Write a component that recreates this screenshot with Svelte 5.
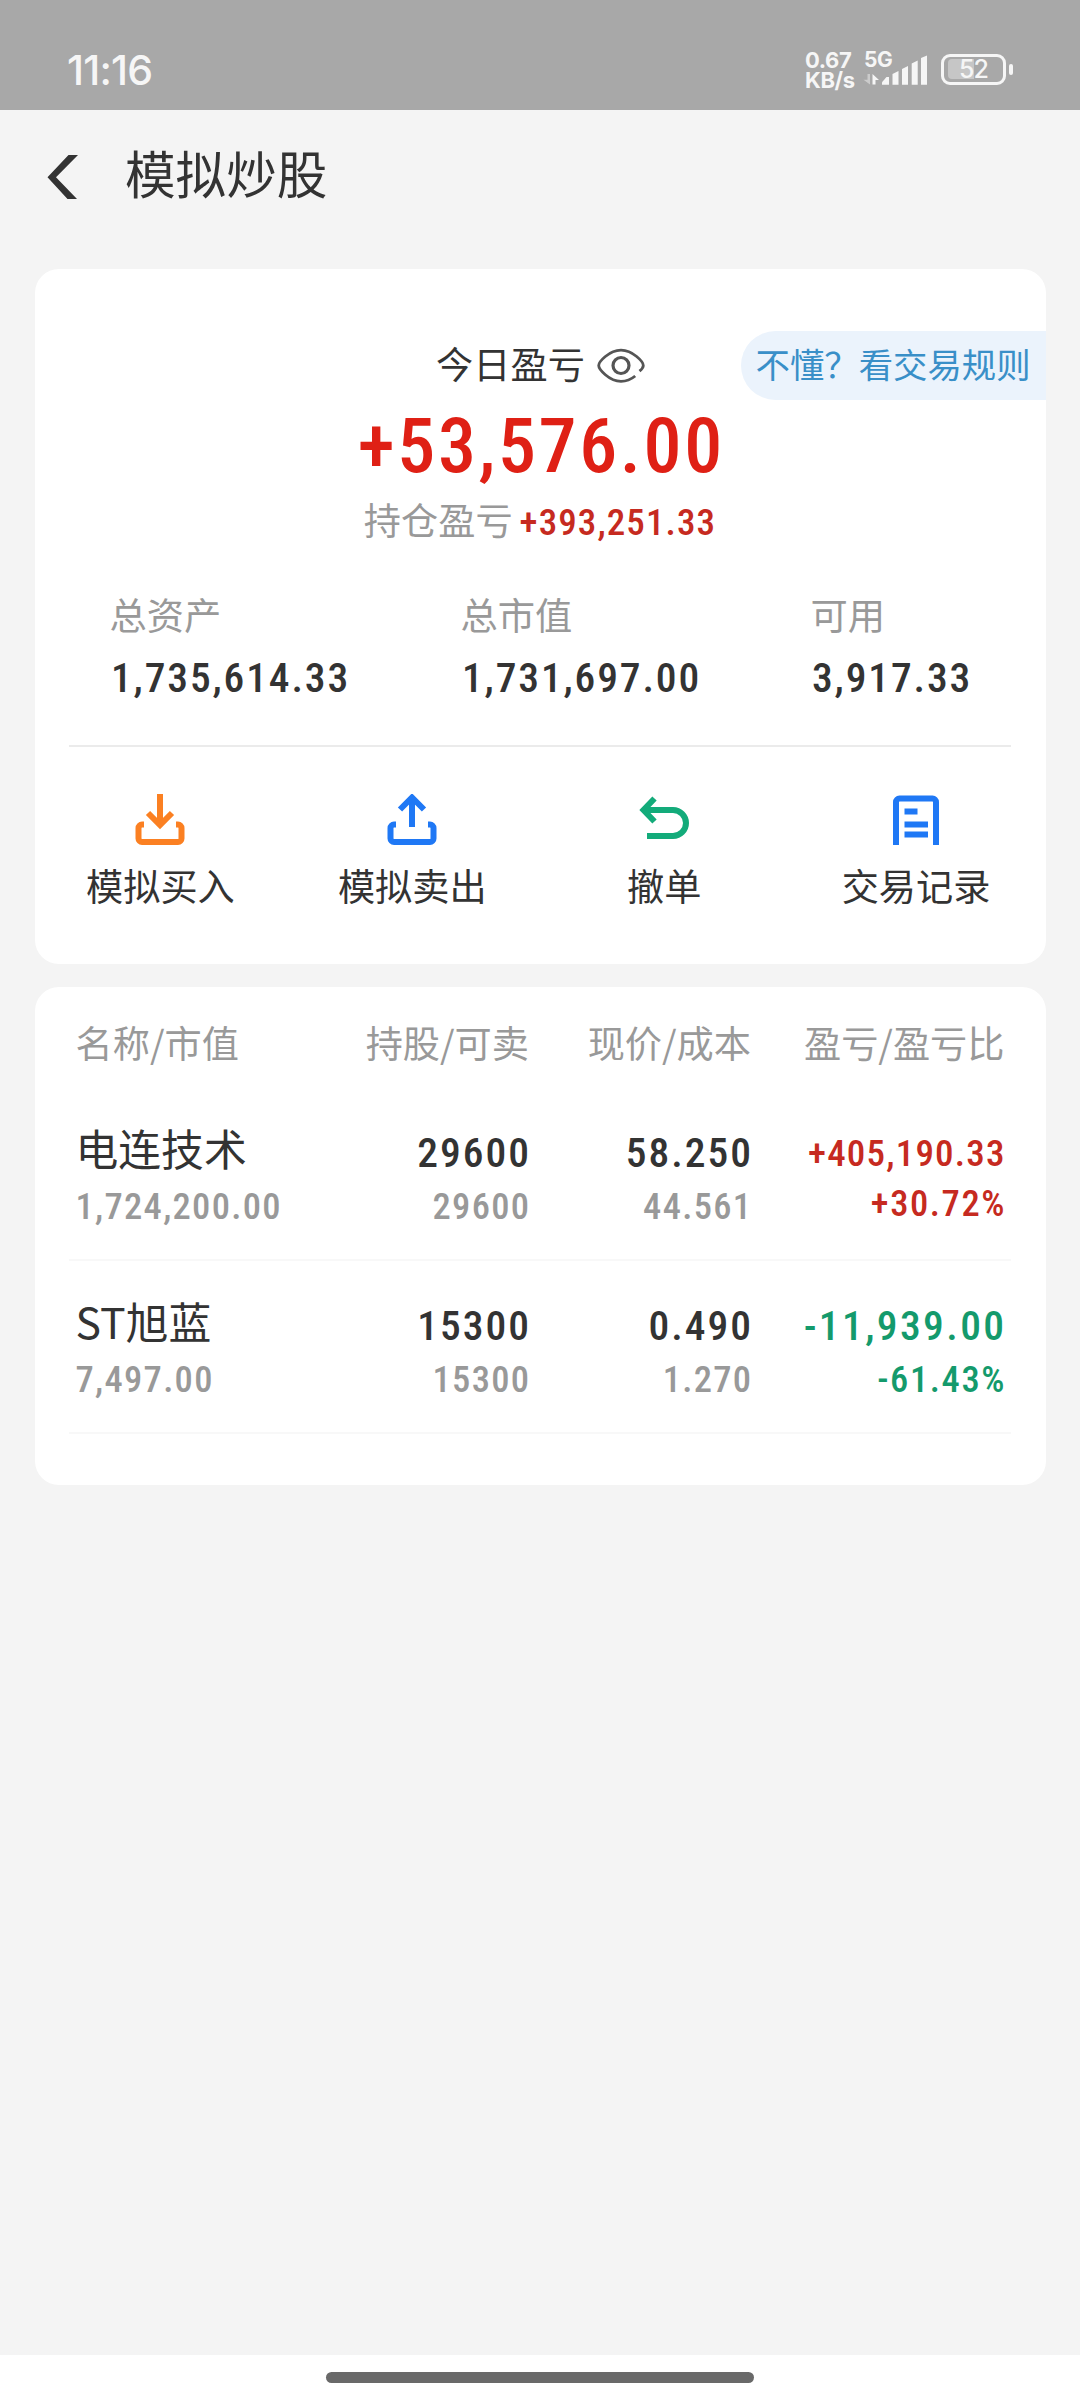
<script lang="ts">
  type Holding = {
    name: string;
    marketValue: string;
    shares: string;
    sellable: string;
    price: string;
    cost: string;
    profit: string;
    ratio: string;
  };

  const stats = [
    { label: '总资产', value: '1,735,614.33' },
    { label: '总市值', value: '1,731,697.00' },
    { label: '可用', value: '3,917.33' },
  ];

  const actions = [
    { id: 'buy', label: '模拟买入' },
    { id: 'sell', label: '模拟卖出' },
    { id: 'cancel', label: '撤单' },
    { id: 'records', label: '交易记录' },
  ];

  const columns = ['名称/市值', '持股/可卖', '现价/成本', '盈亏/盈亏比'];

  const holdings: Holding[] = [
    {
      name: '电连技术',
      marketValue: '1,724,200.00',
      shares: '29600',
      sellable: '29600',
      price: '58.250',
      cost: '44.561',
      profit: '+405,190.33',
      ratio: '+30.72%',
    },
    {
      name: 'ST旭蓝',
      marketValue: '7,497.00',
      shares: '15300',
      sellable: '15300',
      price: '0.490',
      cost: '1.270',
      profit: '-11,939.00',
      ratio: '-61.43%',
    },
  ];

  // long amounts drop to the smaller size so they fit the last column
  const isLong = (value: string) => value.length > 10;
</script>

<div class="screen">
  <div class="status-bar">
    <span class="clock">11:16</span>
    <div class="status-right">
      <div class="speed"><span>0.67</span><span>KB/s</span></div>
      <div class="signal">
        <span class="network">5G</span>
        <svg width="66" height="36" viewBox="0 0 66 36" fill="#f6f6f6">
          <path d="M4.5 24h2.5v10.5L.5 29.8h4z" opacity="0.45" />
          <path d="M9.5 34.5V24l6.500 6h-3.500v4.500z" />
          <path d="M19 34.700v-2.500l4.500-5.200h2.500v7.700z" />
          <path d="M29.500 24l6-3v13.700h-6z" />
          <path d="M39 19l6-3v18.700h-6z" />
          <path d="M48.700 13.500l6-3v24.200h-6z" />
          <path d="M58 8l6-2.500v29.200h-6z" />
        </svg>
      </div>
      <div class="battery"><span class="level"></span><span class="percent">52</span></div>
      <span class="battery-tip"></span>
    </div>
  </div>

  <header class="nav">
    <svg width="32" height="46" viewBox="0 0 32 46" fill="#333">
      <path d="M22.500 1H32L10 23.200 31 45h-9.500L1.500 23.200z" />
    </svg>
    <h1>模拟炒股</h1>
  </header>

  <section class="card summary">
    <div class="today">
      <div class="today-label">
        <span>今日盈亏</span>
        <svg width="48" height="36" viewBox="0 0 48 36" fill="none" stroke="#555" stroke-width="2.800">
          <path
            d="M42.500 23.200C45.200 21 46.300 19.200 46.300 17.500 46.300 14 36 2.200 24 2.200S1.700 14 1.700 17.500 12 33.300 24 33.300c5.200 0 10.200-2 14.200-5.300"
          />
          <circle cx="24" cy="17.500" r="8" stroke-width="3.200" />
        </svg>
      </div>
      <span class="rules">不懂？看交易规则</span>
    </div>
    <div class="today-value">+53,576.00</div>
    <div class="position">
      <span>持仓盈亏</span>
      <strong>+393,251.33</strong>
    </div>

    <div class="stats">
      {#each stats as stat (stat.label)}
        <div>
          <p class="stat-label">{stat.label}</p>
          <p class="stat-value">{stat.value}</p>
        </div>
      {/each}
    </div>

    <div class="actions">
      {#each actions as action (action.id)}
        <div class="action">
          <svg width="52" height="52" viewBox="0 0 52 52" fill="none" stroke-width="6">
            {#if action.id === 'buy'}
              <g stroke="#fb8022">
                <path d="M26 0v32" />
                <path d="M14 19l12 12 12-12" />
                <path d="M10 30.500H8a3.500 3.500 0 0 0-3.500 3.500v10.500a3.500 3.500 0 0 0 3.500 3.500h36a3.500 3.500 0 0 0 3.500-3.500V34a3.500 3.500 0 0 0-3.500-3.500h-2" />
              </g>
            {:else if action.id === 'sell'}
              <g stroke="#1f78f5">
                <path d="M26 33V4" />
                <path d="M14 15.500l12-12 12 12" />
                <path d="M10 30.500H8a3.500 3.500 0 0 0-3.500 3.500v10.500a3.500 3.500 0 0 0 3.500 3.500h36a3.500 3.500 0 0 0 3.500-3.500V34a3.500 3.500 0 0 0-3.500-3.500h-2" />
              </g>
            {:else if action.id === 'cancel'}
              <g stroke="#13ab7a">
                <path d="M16.500 4.500L5.500 16l11 11.500" />
                <path d="M6 16h29a13 13 0 0 1 0 26H9" />
              </g>
            {:else}
              <g stroke="#1f78f5">
                <path d="M6 51V8a3.500 3.500 0 0 1 3.500-3.500h33A3.500 3.500 0 0 1 46 8v43" />
                <path d="M14.500 17.500h13M14.500 30.500h23.500M14.500 40.500h23.500" />
              </g>
            {/if}
          </svg>
          <span>{action.label}</span>
        </div>
      {/each}
    </div>
  </section>

  <section class="card holdings">
    <div class="row table-head">
      {#each columns as column (column)}
        <span>{column}</span>
      {/each}
    </div>

    {#each holdings as item (item.name)}
      <div class="row holding">
        <div class="cell">
          <p class="name">{item.name}</p>
          <p class="sub">{item.marketValue}</p>
        </div>
        <div class="cell">
          <p class="main">{item.shares}</p>
          <p class="sub">{item.sellable}</p>
        </div>
        <div class="cell">
          <p class="main">{item.price}</p>
          <p class="sub">{item.cost}</p>
        </div>
        <div
          class="cell profit"
          class:down={item.profit.startsWith('-')}
          class:compact={isLong(item.profit)}
        >
          <p class="main">{item.profit}</p>
          <p class="sub">{item.ratio}</p>
        </div>
      </div>
    {/each}
  </section>

  <footer class="gesture-bar"><span></span></footer>
</div>

<style>
  :global(body) {
    background: #f4f4f4;
  }

  .screen {
    width: 1080px;
    height: 2400px;
    display: flex;
    flex-direction: column;
    overflow: hidden;
    background: #f4f4f4;
    color: #333;
    font-family: 'Noto Sans CJK SC', sans-serif;
  }

  p,
  h1 {
    margin: 0;
    font-weight: 400;
  }

  .status-bar {
    box-sizing: border-box;
    height: 110px;
    padding: 30px 67px 0 67px;
    display: flex;
    justify-content: space-between;
    align-items: flex-start;
    background: #a8a8a8;
    color: #f6f6f6;
    font-family: Inter, sans-serif;
  }

  .clock {
    font-size: 41px;
    line-height: 80px;
    font-weight: 500;
    letter-spacing: -0.8px;
  }

  .status-right {
    display: flex;
    align-items: flex-start;
    padding-top: 20px;
  }

  .speed {
    width: 58px;
    display: flex;
    flex-direction: column;
    font-size: 22px;
    line-height: 20px;
    font-weight: 700;
    letter-spacing: -0.4px;
  }

  .signal {
    position: relative;
    height: 36px;
  }

  .network {
    position: absolute;
    left: 1px;
    top: 0;
    font-size: 21px;
    line-height: 20px;
    font-weight: 700;
    letter-spacing: -0.5px;
  }

  .battery {
    position: relative;
    box-sizing: border-box;
    width: 65px;
    height: 31px;
    margin: 4px 3px 0 12px;
    display: grid;
    place-items: center;
    border: 3px solid #f6f6f6;
    border-radius: 9px;
  }

  .level {
    position: absolute;
    left: 4px;
    top: 2px;
    width: 26px;
    height: 20px;
    border-radius: 4px 0 0 4px;
    background: #c6c6c6;
  }

  .percent {
    position: relative;
    font-size: 25px;
    line-height: 25px;
    font-weight: 500;
    letter-spacing: -1px;
  }

  .battery-tip {
    width: 4px;
    height: 11px;
    margin-top: 14px;
    border-radius: 2px;
    background: #f6f6f6;
  }

  .nav {
    box-sizing: border-box;
    height: 159px;
    padding: 0 0 25px 45.5px;
    display: flex;
    align-items: center;
    gap: 47.5px;
  }

  .nav h1 {
    font-size: 50.6px;
    line-height: 60px;
    margin-top: -10px;
  }

  .card {
    box-sizing: border-box;
    margin: 0 34.5px;
    border-radius: 24px;
    background: #fff;
  }

  .summary {
    height: 694.5px;
    padding-top: 62px;
  }

  .today {
    display: grid;
    grid-template-columns: 1fr auto 1fr;
    height: 69px;
  }

  .today-label {
    grid-column: 2;
    display: flex;
    align-items: center;
    gap: 12px;
    padding-left: 1px;
    font-size: 37.2px;
  }

  .today-label span {
    padding-bottom: 5px;
    line-height: 50px;
  }

  .rules {
    box-sizing: border-box;
    justify-self: end;
    width: 305px;
    padding-left: 15px;
    border-radius: 34.5px 0 0 34.5px;
    background: #ebf3fc;
    color: #398fc8;
    font-size: 34.4px;
    line-height: 64px;
    white-space: nowrap;
  }

  .today-value,
  .position strong,
  .stat-value,
  .main,
  .sub {
    font-family: Roboto, sans-serif;
    font-weight: 500;
    font-stretch: 85%;
  }

  .today-value {
    margin: 8px -2.6px 0 0;
    text-align: center;
    font-size: 76px;
    line-height: 76px;
    letter-spacing: 2.6px;
    color: #df2015;
  }

  .position {
    height: 48px;
    margin-top: 11px;
    display: flex;
    justify-content: center;
    align-items: baseline;
    gap: 7px;
    font-size: 37.2px;
    line-height: 49px;
    color: #999;
  }

  .position strong {
    font-size: 37px;
    letter-spacing: 1.1px;
    color: #c62a20;
  }

  .stats {
    display: grid;
    grid-template-columns: 351px 350px 1fr;
    margin: 46px 34.5px 0;
    padding: 0 0 42px 42px;
    border-bottom: 2px solid #ebebeb;
  }

  .stat-label {
    margin-left: -1.5px;
    font-size: 37.3px;
    line-height: 50px;
    color: #999;
  }

  .stat-value {
    margin-top: 14px;
    font-size: 41.5px;
    line-height: 50px;
    letter-spacing: 1.85px;
  }

  .actions {
    display: grid;
    grid-template-columns: repeat(4, 1fr);
    padding: 47px 3.5px 0 0;
  }

  .action {
    display: flex;
    flex-direction: column;
    align-items: center;
    gap: 13px;
    font-size: 37.2px;
    line-height: 52px;
  }

  .holdings {
    height: 498px;
    margin-top: 23.5px;
    padding: 29px 34.5px 0;
  }

  .row {
    display: grid;
    grid-template-columns: 242.5px 211px 222px 1fr;
    padding: 0 6.5px;
    text-align: right;
  }

  .row > :first-child {
    text-align: left;
  }

  .table-head {
    height: 72px;
    font-size: 37.2px;
    line-height: 52px;
    color: #999;
    white-space: nowrap;
  }

  .holding {
    box-sizing: border-box;
    height: 173px;
    padding-top: 36px;
    border-bottom: 2px solid #f8f8f8;
  }

  .name {
    height: 57px;
    font-size: 42.8px;
    line-height: 46px;
  }

  /* pull back the tracking after the last digit */
  .main {
    margin-right: -2px;
    font-size: 41.5px;
    line-height: 57px;
    letter-spacing: 2px;
  }

  .sub {
    margin-right: -1.3px;
    font-size: 36.5px;
    line-height: 52px;
    letter-spacing: 1.3px;
    color: #999;
  }

  .profit,
  .profit .sub {
    color: #c62a20;
  }

  .profit .sub {
    margin-right: -1.6px;
    letter-spacing: 1.6px;
  }

  .compact .main {
    font-size: 37px;
    line-height: 59px;
    height: 57px;
    margin-right: -1.2px;
    letter-spacing: 1.2px;
  }

  .compact .sub {
    line-height: 46px;
  }

  .profit.down,
  .profit.down .sub {
    color: #149a6c;
  }

  .down .main {
    letter-spacing: 2.4px;
  }

  .gesture-bar {
    box-sizing: border-box;
    height: 45px;
    margin-top: auto;
    padding-top: 17px;
    background: #fff;
  }

  .gesture-bar span {
    display: block;
    width: 428px;
    height: 11px;
    margin: 0 auto;
    border-radius: 6px;
    background: #696969;
  }
</style>
